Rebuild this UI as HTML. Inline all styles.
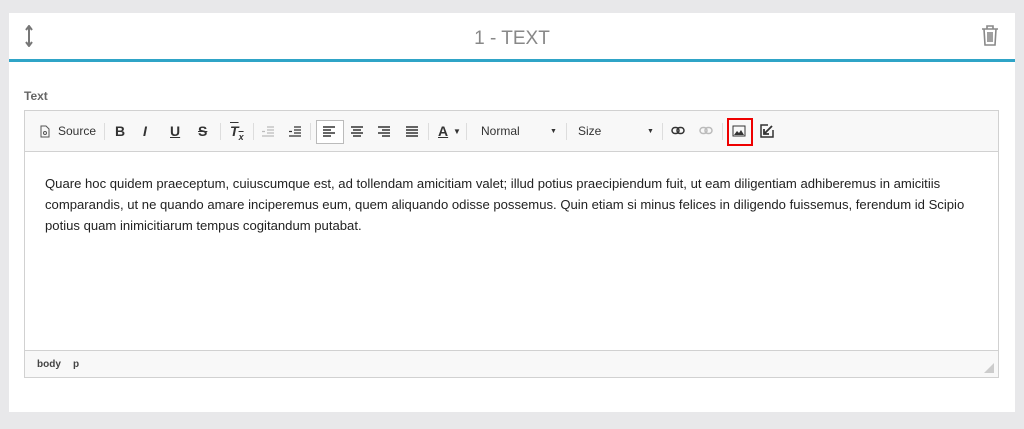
<!DOCTYPE html><html><head><style>
body{margin:0;width:1024px;height:429px;background:#e8e8ea;font-family:"Liberation Sans",sans-serif;position:relative;overflow:hidden}
.card{position:absolute;left:9px;top:13px;width:1006px;height:399px;background:#fff}
.hdr{position:absolute;left:0;top:0;width:1006px;height:46px;border-bottom:3px solid #2fa4c7}
.title{position:absolute;left:0;width:1006px;top:15px;text-align:center;font-size:19px;color:#888}
.lbl{position:absolute;left:15px;top:76px;font-size:12px;font-weight:bold;color:#666}
.ed{position:absolute;left:15px;top:97px;width:973px;height:266px;border:1px solid #d1d1d1}
.tb{position:absolute;left:0;top:0;width:973px;height:40px;background:#f8f8f8;border-bottom:1px solid #d1d1d1;font-size:12px;color:#333}
.tb span{position:absolute;top:13px}
.tb svg.al{position:absolute;top:15px}
.sep{position:absolute;top:12px;width:1px;height:17px;background:#ddd}
.txt{position:absolute;left:20px;top:62px;width:935px;font-size:13.1px;line-height:21px;color:#222}
.sb{position:absolute;left:0;bottom:0;width:973px;height:26px;background:#f8f8f8;border-top:1px solid #d1d1d1;font-size:10px;font-weight:bold;color:#444}
</style></head><body>
<div class="card">
<div class="hdr">
<svg style="position:absolute;left:15px;top:12px" width="10" height="22"><path d="M5 2V20M2 5L5 1 8 5M2 17L5 21 8 17" stroke="#777" stroke-width="2" fill="none"/></svg>
<div class="title">1 - TEXT</div>
<svg style="position:absolute;left:972px;top:12px" width="18" height="22"><path d="M1 4H17M6 4V1H12V4M3 4L4 20H14L15 4M7 7V17M9 7V17M11 7V17" stroke="#888" stroke-width="1.6" fill="none"/></svg>
</div>
<div class="lbl">Text</div>
<div class="ed">
<div class="tb">
<svg style="position:absolute;left:15px;top:14px" width="10" height="13"><path d="M1 1H6L9 4V12H1Z" stroke="#555" fill="none"/><circle cx="5" cy="8" r="1.5" stroke="#555" fill="none"/></svg>
<span style="left:33px">Source</span>
<div class="sep" style="left:79px"></div>
<span style="left:90px;font-weight:bold;font-size:14px;top:12px">B</span>
<span style="left:118px;font-style:italic;font-weight:bold;font-size:14px;top:12px">I</span>
<span style="left:145px;text-decoration:underline;font-weight:bold;font-size:14px;top:12px">U</span>
<span style="left:173px;text-decoration:line-through;font-weight:bold;font-size:14px;top:12px">S</span>
<div class="sep" style="left:195px"></div>
<span style="left:205px;font-style:italic;font-weight:bold;font-size:14px;top:12px;text-decoration:overline">T<sub style="font-size:9px">x</sub></span>
<div class="sep" style="left:228px"></div>
<svg class="al" style="left:237px" width="12" height="11"><path d="M5 1H12M5 4H12M5 7H12M0 10H12M0 5.5H3" stroke="#bbb" stroke-width="1.3"/></svg>
<svg class="al" style="left:264px" width="12" height="11"><path d="M5 1H12M5 4H12M5 7H12M0 10H12M0 5.5H3" stroke="#333" stroke-width="1.3"/></svg>
<div class="sep" style="left:285px"></div>
<div style="position:absolute;left:291px;top:9px;width:26px;height:22px;border:1px solid #bbb;background:#fff"></div>
<svg class="al" style="left:298px" width="12" height="11"><path d="M0 1H12M0 4H8M0 7H12M0 10H8" stroke="#333" stroke-width="1.5"/></svg>
<svg class="al" style="left:326px" width="12" height="11"><path d="M0 1H12M2 4H10M0 7H12M2 10H10" stroke="#333" stroke-width="1.5"/></svg>
<svg class="al" style="left:353px" width="12" height="11"><path d="M0 1H12M4 4H12M0 7H12M4 10H12" stroke="#333" stroke-width="1.5"/></svg>
<svg class="al" style="left:381px" width="12" height="11"><path d="M0 1H12M0 4H12M0 7H12M0 10H12" stroke="#333" stroke-width="1.5"/></svg>
<div class="sep" style="left:403px"></div>
<span style="left:413px;font-weight:bold;font-size:14px;top:12px;text-decoration:underline">A</span><span style="left:428px;font-size:8px;top:16px">▼</span>
<div class="sep" style="left:441px"></div>
<span style="left:456px">Normal</span><span style="left:525px;font-size:7px;top:17px">▼</span>
<div class="sep" style="left:541px"></div>
<span style="left:553px">Size</span><span style="left:622px;font-size:7px;top:17px">▼</span>
<div class="sep" style="left:637px"></div>
<svg class="al" style="left:646px" width="14" height="10"><rect x="1" y="1.5" width="7" height="6" rx="3" stroke="#333" stroke-width="1.5" fill="none"/><rect x="6" y="1.5" width="7" height="6" rx="3" stroke="#333" stroke-width="1.5" fill="none"/></svg>
<svg class="al" style="left:674px" width="14" height="11"><rect x="1" y="1.5" width="7" height="6" rx="3" stroke="#bbb" stroke-width="1.5" fill="none"/><rect x="6" y="1.5" width="7" height="6" rx="3" stroke="#bbb" stroke-width="1.5" fill="none"/></svg>
<div class="sep" style="left:697px"></div>
<div style="position:absolute;left:702px;top:7px;width:22px;height:24px;border:2px solid #e00"></div>
<svg style="position:absolute;left:707px;top:14px" width="14" height="12"><rect x="1" y="1" width="12" height="10" stroke="#333" fill="none"/><path d="M2 10L5 6 7 8 9 5 12 10Z" fill="#333"/></svg>
<svg style="position:absolute;left:735px;top:13px" width="14" height="14"><path d="M8 1H1V13H13V6" stroke="#333" stroke-width="1.5" fill="none"/><path d="M12 2L4 10M4 5V10H9" stroke="#333" stroke-width="1.8" fill="none"/></svg>
</div>
<div class="txt">Quare hoc quidem praeceptum, cuiuscumque est, ad tollendam amicitiam valet; illud potius praecipiendum fuit, ut eam diligentiam adhiberemus in amicitiis comparandis, ut ne quando amare inciperemus eum, quem aliquando odisse possemus. Quin etiam si minus felices in diligendo fuissemus, ferendum id Scipio potius quam inimicitiarum tempus cogitandum putabat.</div>
<div class="sb"><span style="position:absolute;left:12px;top:8px">body</span><span style="position:absolute;left:48px;top:8px">p</span>
<svg style="position:absolute;right:4px;top:12px" width="10" height="10"><path d="M10 0V10H0Z" fill="#ccc"/></svg></div>
</div>
</div>
</body></html>
